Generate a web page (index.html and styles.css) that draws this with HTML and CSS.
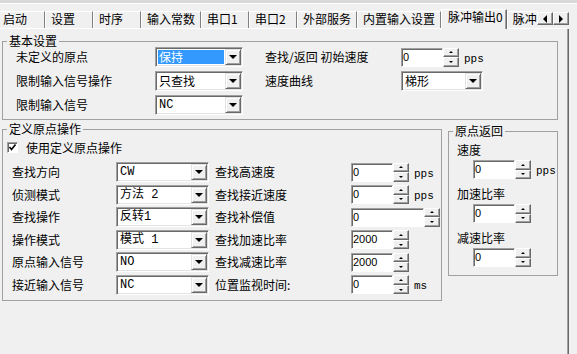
FILE: index.html
```html
<!DOCTYPE html>
<html lang="zh-CN">
<head>
  <meta charset="UTF-8" />
  <title>脉冲输出0</title>
  <link rel="stylesheet" href="styles.css">
</head>
<body>
  <div class="topbar"></div>

  <div class="tabstrip">
    <div class="tabs">
      <div class="tab first">启动</div>
      <div class="tab">设置</div>
      <div class="tab">时序</div>
      <div class="tab">输入常数</div>
      <div class="tab">串口1</div>
      <div class="tab">串口2</div>
      <div class="tab">外部服务</div>
      <div class="tab">内置输入设置</div>
      <div class="tab active">脉冲输出0</div>
      <div class="tab">脉冲</div>
    </div>
    <div class="tab-arrows">
      <span class="arrow-btn"><i class="arrow-left"></i></span>
      <span class="arrow-btn"><i class="arrow-right"></i></span>
    </div>
  </div>

  <div class="pane">
    <fieldset class="group basic">
      <legend>基本设置</legend>
      <div class="basic-grid">
        <span>未定义的原点</span>
        <div class="combo"><span class="combo-text selected">保持</span><span class="combo-btn"></span></div>
        <span>查找/返回 初始速度</span>
        <div class="spin-line">
          <div class="spin"><span class="spin-val">0</span><span class="spin-btns"><i class="up"></i><i class="down"></i></span></div>
          <span class="unit">pps</span>
        </div>

        <span>限制输入信号操作</span>
        <div class="combo"><span class="combo-text">只查找</span><span class="combo-btn"></span></div>
        <span>速度曲线</span>
        <div class="combo short"><span class="combo-text">梯形</span><span class="combo-btn"></span></div>

        <span>限制输入信号</span>
        <div class="combo"><span class="combo-text mono">NC</span><span class="combo-btn"></span></div>
      </div>
    </fieldset>

    <div class="lower">
      <fieldset class="group home">
        <legend>定义原点操作</legend>
        <div class="check-row">
          <span class="checkbox">
            <svg width="9" height="9" viewBox="0 0 9 9"><polyline points="1.5,4 3.5,6.5 7.5,1.5" fill="none" stroke="#000" stroke-width="1.6"/></svg>
          </span>
          <span>使用定义原点操作</span>
        </div>
        <div class="home-grid">
          <span>查找方向</span>
          <div class="combo"><span class="combo-text mono">CW</span><span class="combo-btn"></span></div>
          <span>查找高速度</span>
          <div class="spin-line">
            <div class="spin"><span class="spin-val">0</span><span class="spin-btns"><i class="up"></i><i class="down"></i></span></div>
            <span class="unit">pps</span>
          </div>

          <span>侦测模式</span>
          <div class="combo"><span class="combo-text mono">方法 2</span><span class="combo-btn"></span></div>
          <span>查找接近速度</span>
          <div class="spin-line">
            <div class="spin"><span class="spin-val">0</span><span class="spin-btns"><i class="up"></i><i class="down"></i></span></div>
            <span class="unit">pps</span>
          </div>

          <span>查找操作</span>
          <div class="combo"><span class="combo-text mono">反转1</span><span class="combo-btn"></span></div>
          <span>查找补偿值</span>
          <div class="spin-line">
            <div class="spin wide"><span class="spin-val">0</span><span class="spin-btns"><i class="up"></i><i class="down"></i></span></div>
          </div>

          <span>操作模式</span>
          <div class="combo"><span class="combo-text mono">模式 1</span><span class="combo-btn"></span></div>
          <span>查找加速比率</span>
          <div class="spin-line">
            <div class="spin"><span class="spin-val">2000</span><span class="spin-btns"><i class="up"></i><i class="down"></i></span></div>
          </div>

          <span>原点输入信号</span>
          <div class="combo"><span class="combo-text mono">NO</span><span class="combo-btn"></span></div>
          <span>查找减速比率</span>
          <div class="spin-line">
            <div class="spin"><span class="spin-val">2000</span><span class="spin-btns"><i class="up"></i><i class="down"></i></span></div>
          </div>

          <span>接近输入信号</span>
          <div class="combo"><span class="combo-text mono">NC</span><span class="combo-btn"></span></div>
          <span>位置监视时间:</span>
          <div class="spin-line">
            <div class="spin"><span class="spin-val">0</span><span class="spin-btns"><i class="up"></i><i class="down"></i></span></div>
            <span class="unit">ms</span>
          </div>
        </div>
      </fieldset>

      <fieldset class="group return">
        <legend>原点返回</legend>
        <div class="return-body">
          <div class="field-label">速度</div>
          <div class="spin-line">
            <div class="spin"><span class="spin-val">0</span><span class="spin-btns"><i class="up"></i><i class="down"></i></span></div>
            <span class="unit">pps</span>
          </div>
          <div class="field-label">加速比率</div>
          <div class="spin-line">
            <div class="spin"><span class="spin-val">0</span><span class="spin-btns"><i class="up"></i><i class="down"></i></span></div>
          </div>
          <div class="field-label">减速比率</div>
          <div class="spin-line">
            <div class="spin"><span class="spin-val">0</span><span class="spin-btns"><i class="up"></i><i class="down"></i></span></div>
          </div>
        </div>
      </fieldset>
    </div>
  </div>
</body>
</html>
```

FILE: styles.css
```css
body {
  margin: 0;
  background-color: #f0f0f0;
  font-family: "Noto Sans CJK SC", "Liberation Sans", sans-serif;
  font-size: 12px;
  line-height: 12px;
  color: #000;
  overflow: hidden;
}
.topbar {
  height: 3px;
  background-color: #d9d9d9;
  border-bottom: 1px solid #fff;
}

/* tab strip */
.tabstrip {
  display: flex;
  width: 569px;
  height: 25px;
  background: linear-gradient(#fff, #fff) no-repeat left bottom / 567px 1px;
}
.tabs {
  display: flex;
  align-items: flex-end;
  width: 537px;
  height: 25px;
  overflow: hidden;
}
.tab {
  flex: none;
  box-sizing: border-box;
  min-width: 48px;
  height: 17px;
  margin-bottom: 1px;
  padding: 0 5px 0 5px;
  border-top: 1px solid #fff;
  border-left: 1px solid #fff;
  border-right: 1px solid #808080;
  line-height: 14px;
  white-space: nowrap;
}
.tab.first {
  min-width: 45px;
  padding-left: 3px;
  border-left: none;
}
.tab.active {
  height: 20px;
  margin-bottom: 0;
  padding: 0 3px 0 6px;
  border-right: 1px solid #696969;
  box-shadow: inset -1px 0 #a0a0a0;
  background-color: #f0f0f0;
}
.tab-arrows {
  display: flex;
  margin-top: 8px;
  height: 13px;
}
.arrow-btn {
  box-sizing: border-box;
  display: flex;
  align-items: center;
  justify-content: center;
  width: 16px;
  height: 13px;
  border: 1px solid;
  border-color: #fff #696969 #696969 #fff;
  box-shadow: inset -1px -1px #a0a0a0;
}
.arrow-left {
  border-right: 4px solid #000;
  border-top: 4px solid transparent;
  border-bottom: 4px solid transparent;
}
.arrow-right {
  border-left: 4px solid #000;
  border-top: 4px solid transparent;
  border-bottom: 4px solid transparent;
}

/* tab page */
.pane {
  box-sizing: border-box;
  width: 569px;
  height: 325px;
  padding: 6px 0 0 2px;
  border-right: 1px solid #696969;
  box-shadow: inset -1px 0 #a0a0a0;
}
.group {
  box-sizing: border-box;
  margin: 0;
  padding: 0;
  border: 1px solid #a0a0a0;
  min-inline-size: 0;
}
.group legend {
  margin-left: 4px;
  padding: 0 2px;
  line-height: 12px;
}
.basic {
  width: 556px;
}
.basic-grid {
  display: grid;
  grid-template-columns: 139px 110px 136px auto;
  grid-auto-rows: 20px;
  row-gap: 4px;
  align-items: center;
  padding: 0 0 4px 13px;
}
.lower {
  display: flex;
  align-items: flex-start;
  gap: 6px;
  margin-top: 3px;
}
.home {
  width: 440px;
}
.check-row {
  display: flex;
  align-items: center;
  height: 13px;
  margin-top: 6px;
  padding-left: 4px;
}
.checkbox {
  box-sizing: border-box;
  display: flex;
  align-items: center;
  justify-content: center;
  width: 11px;
  height: 11px;
  margin-right: 8px;
  background-color: #fff;
  border: 1px solid;
  border-color: #a0a0a0 #fff #fff #a0a0a0;
  box-shadow: inset 1px 1px #696969;
}
.home-grid {
  display: grid;
  grid-template-columns: 104px 99px 136px auto;
  grid-auto-rows: 20px;
  row-gap: 2.6px;
  align-items: center;
  margin-top: 8px;
  padding: 0 0 5px 9px;
}
.return {
  width: 110px;
  margin-top: 2px;
}
.return-body {
  padding: 6px 0 8px 8px;
}
.field-label {
  line-height: 14px;
  margin-bottom: 3px;
}
.return-body .spin-line {
  margin: 0 0 8px 16px;
}
.return-body .spin-line:last-child {
  margin-bottom: 0;
}

/* combo box */
.combo {
  box-sizing: border-box;
  display: flex;
  width: 93px;
  height: 20px;
  background-color: #fff;
  border: 1px solid;
  border-color: #a0a0a0 #fff #fff #a0a0a0;
  box-shadow: inset 1px 1px #696969, inset -1px -1px #e3e3e3;
  padding: 1px;
}
.basic .combo {
  width: 88px;
}
.basic .combo.short {
  width: 82px;
}
.combo-text {
  flex: 1;
  margin: 1px;
  padding-left: 1px;
  line-height: 14px;
  white-space: nowrap;
}
.combo-text.mono {
  font-family: "Liberation Mono", "Noto Sans CJK SC", monospace;
}
.combo-text.selected {
  background-color: #3399ff;
  color: #fff;
}
.combo-btn {
  box-sizing: border-box;
  display: flex;
  align-items: center;
  justify-content: center;
  width: 16px;
  background-color: #f0f0f0;
  border: 1px solid;
  border-color: #e3e3e3 #696969 #696969 #e3e3e3;
  box-shadow: inset 1px 1px #fff, inset -1px -1px #a0a0a0;
}
.combo-btn::after {
  content: "";
  border-top: 4px solid #000;
  border-left: 4px solid transparent;
  border-right: 4px solid transparent;
}

/* spin box */
.spin-line {
  display: flex;
  align-items: flex-start;
}
.spin {
  display: flex;
  width: 58px;
  height: 19px;
}
.spin.wide {
  width: 89px;
}
.spin-val {
  box-sizing: border-box;
  flex: 1;
  padding-left: 1px;
  background-color: #fff;
  border: 1px solid;
  border-color: #a0a0a0 #fff #fff #a0a0a0;
  box-shadow: inset 1px 1px #696969;
  font-family: "Liberation Sans", sans-serif;
  font-size: 11px;
  line-height: 16px;
}
.spin-btns {
  display: flex;
  flex-direction: column;
  width: 16px;
}
.spin-btns i {
  box-sizing: border-box;
  flex: 1;
  display: flex;
  align-items: center;
  justify-content: center;
  border: 1px solid;
  border-color: #fff #696969 #696969 #fff;
  box-shadow: inset -1px -1px #a0a0a0;
}
.spin-btns .up::after {
  content: "";
  border-bottom: 2px solid #000;
  border-left: 2px solid transparent;
  border-right: 2px solid transparent;
}
.spin-btns .down::after {
  content: "";
  border-top: 2px solid #000;
  border-left: 2px solid transparent;
  border-right: 2px solid transparent;
}
.unit {
  margin: 6px 0 0 5px;
  font-family: "Liberation Mono", monospace;
  font-size: 11px;
  line-height: 11px;
}
```
